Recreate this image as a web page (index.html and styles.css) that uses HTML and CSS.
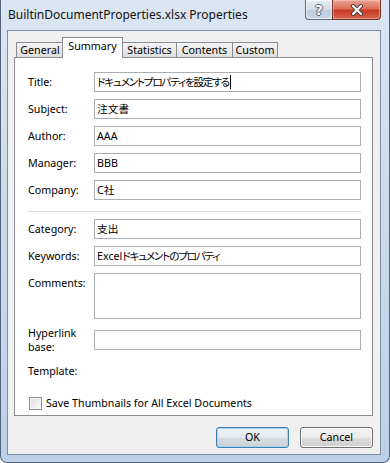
FILE: index.html
```html
<!DOCTYPE html>
<html lang="en">
<head>
  <meta charset="UTF-8" />
  <title>BuiltinDocumentProperties.xlsx Properties</title>
  <link rel="stylesheet" href="styles.css">
</head>
<body>
  <div class="window">
    <header class="titlebar">
      <span class="window-title">BuiltinDocumentProperties.xlsx Properties</span>
      <div class="caption-buttons">
        <div class="cap-btn help-btn"><span>?</span></div>
        <div class="cap-btn close-btn">
          <svg width="14" height="12" viewBox="0 0 14 12">
            <path d="M3 2 L11 10 M11 2 L3 10" stroke="#4a3a3a" stroke-width="4" stroke-linecap="round" fill="none"/>
            <path d="M3 2 L11 10 M11 2 L3 10" stroke="#ffffff" stroke-width="2.2" stroke-linecap="round" fill="none"/>
          </svg>
        </div>
      </div>
    </header>

    <main class="client">
      <nav class="tabs">
        <div class="tab tab-general">General</div>
        <div class="tab tab-summary active">Summary</div>
        <div class="tab tab-statistics">Statistics</div>
        <div class="tab tab-contents">Contents</div>
        <div class="tab tab-custom">Custom</div>
      </nav>

      <section class="panel">
        <div class="fields">
          <label>Title:</label>
          <div class="textbox cjk"><span class="kana">ドキュメントプロパティを設定する</span><span class="caret"></span></div>
          <label>Subject:</label>
          <div class="textbox cjk">注文書</div>
          <label>Author:</label>
          <div class="textbox">AAA</div>
          <label>Manager:</label>
          <div class="textbox">BBB</div>
          <label>Company:</label>
          <div class="textbox cjk">C社</div>
        </div>

        <div class="separator"></div>

        <div class="fields">
          <label>Category:</label>
          <div class="textbox cjk">支出</div>
          <label>Keywords:</label>
          <div class="textbox cjk">Excel<span class="kana">ドキュメントのプロパティ</span></div>
          <label class="top">Comments:</label>
          <div class="textbox multiline"></div>
          <label class="two-line">Hyperlink<br>base:</label>
          <div class="textbox"></div>
          <label class="template">Template:</label>
          <div></div>
        </div>

        <div class="check-row">
          <span class="checkbox"></span>
          <span>Save Thumbnails for All Excel Documents</span>
        </div>
      </section>

      <footer class="buttons">
        <div class="btn default">OK</div>
        <div class="btn">Cancel</div>
      </footer>
    </main>
  </div>
</body>
</html>
```

FILE: styles.css
```css
* {
  margin: 0;
  padding: 0;
  box-sizing: border-box;
}

body {
  background: #ffffff;
  font-family: "Noto Sans", "Noto Sans CJK JP", sans-serif;
  font-size: 10.7px;
  color: #000000;
}

.window {
  width: 390px;
  height: 463px;
  display: flex;
  flex-direction: column;
  padding: 0 8px 7px 6px;
  background: linear-gradient(180deg, #dbe6f2 0%, #cddcec 40%, #bcd0e7 100%);
  border: 1px solid #52647b;
  border-top: none;
  border-radius: 0 0 7px 7px;
}

/* title bar */

.titlebar {
  height: 30px;
  display: flex;
  justify-content: space-between;
  align-items: flex-start;
}

.window-title {
  font-size: 12px;
  line-height: 16px;
  padding: 7px 0 0 1px;
  color: #111;
}

.caption-buttons {
  display: flex;
}

.cap-btn {
  height: 20px;
  display: flex;
  align-items: center;
  justify-content: center;
  border: 1px solid #5a6b80;
  border-top: none;
}

.help-btn {
  width: 27px;
  border-right: none;
  border-radius: 0 0 0 4px;
  background: linear-gradient(180deg, #e6edf5 0%, #d3dee9 50%, #bccbdc 51%, #c9d7e6 100%);
  box-shadow: inset 0 0 0 1px rgba(255, 255, 255, 0.6);
}

.help-btn span {
  font-family: "DejaVu Sans", sans-serif;
  font-weight: bold;
  font-size: 14px;
  line-height: 14px;
  color: #ffffff;
  text-shadow: 1px 0 0 #55606e, -1px 0 0 #55606e, 0 1px 0 #55606e, 0 -1px 0 #55606e;
}

.close-btn {
  width: 49px;
  border-color: #6b2f28;
  border-radius: 0 0 4px 0;
  background: linear-gradient(180deg, #eba595 0%, #dc6e58 45%, #c73a26 55%, #d8644a 100%);
  box-shadow: inset 0 0 0 1px rgba(255, 210, 200, 0.5);
}

/* client area */

.client {
  flex: 1;
  display: flex;
  flex-direction: column;
  background: #f0f0f0;
  border: 1px solid #7d8ea5;
  padding: 6px 7px 0 6px;
}

.tabs {
  display: flex;
  align-items: flex-end;
  height: 20px;
  padding-left: 2px;
  position: relative;
  z-index: 1;
}

.tab {
  height: 15px;
  line-height: 14px;
  text-align: center;
  border: 1px solid #898c95;
  border-bottom: none;
  margin-left: -1px;
  background: linear-gradient(180deg, #f4f4f4 0%, #e9e9e9 50%, #dedede 100%);
}

.tab-general { width: 48px; margin-left: 0; }
.tab-summary { width: 61px; }
.tab-statistics { width: 55px; }
.tab-contents { width: 57px; }
.tab-custom { width: 46px; }

.tab.active {
  height: 21px;
  margin: 0 0 -1px -2px;
  padding-top: 1px;
  background: #ffffff;
  position: relative;
  z-index: 2;
}

.panel {
  height: 359px;
  background: #ffffff;
  border: 1px solid #898c95;
  padding: 14px 11px 0 13px;
}

.fields {
  display: grid;
  grid-template-columns: 66px 1fr;
  row-gap: 7px;
  align-items: center;
}

.fields label {
  line-height: 14px;
}

.fields label.top {
  align-self: start;
  padding-top: 3px;
}

.fields label.template {
  height: 20px;
  line-height: 20px;
}

.textbox {
  height: 20px;
  border: 1px solid #abadb3;
  padding: 0 2px;
  line-height: 18px;
  white-space: nowrap;
  overflow: hidden;
}

.textbox.multiline {
  height: 46px;
}

.cjk {
  font-feature-settings: "palt";
}

.kana {
  letter-spacing: -1.3px;
}

.caret {
  display: inline-block;
  width: 1px;
  height: 14px;
  margin-left: 1px;
  background: #000;
  vertical-align: -3px;
}

.separator {
  height: 1px;
  background: #dcdcdc;
  margin: 11px 0 7px;
}

.check-row {
  display: flex;
  align-items: center;
  gap: 4px;
  margin-top: 15px;
  padding-left: 1px;
}

.checkbox {
  width: 13px;
  height: 13px;
  border: 1px solid #8e8f8f;
  background: linear-gradient(135deg, #dcdcdc 0%, #f0f0f0 60%, #fbfbfb 100%);
  box-shadow: inset 0 0 0 1px #f4f4f4;
}

/* dialog buttons */

.buttons {
  display: flex;
  justify-content: flex-end;
  gap: 11px;
  padding-top: 11px;
}

.btn {
  width: 73px;
  height: 21px;
  line-height: 19px;
  text-align: center;
  border: 1px solid #707070;
  border-radius: 3px;
  background: linear-gradient(180deg, #f2f2f2 0%, #ebebeb 50%, #dddddd 51%, #cfcfcf 100%);
  box-shadow: inset 0 0 0 1px #fcfcfc;
}

.btn.default {
  border-color: #3c7fb1;
  background: linear-gradient(180deg, #eef3f6 0%, #e4eaee 50%, #d6dde2 51%, #cbd3d9 100%);
  box-shadow: inset 0 0 0 1px #9ed8f4;
}
```
